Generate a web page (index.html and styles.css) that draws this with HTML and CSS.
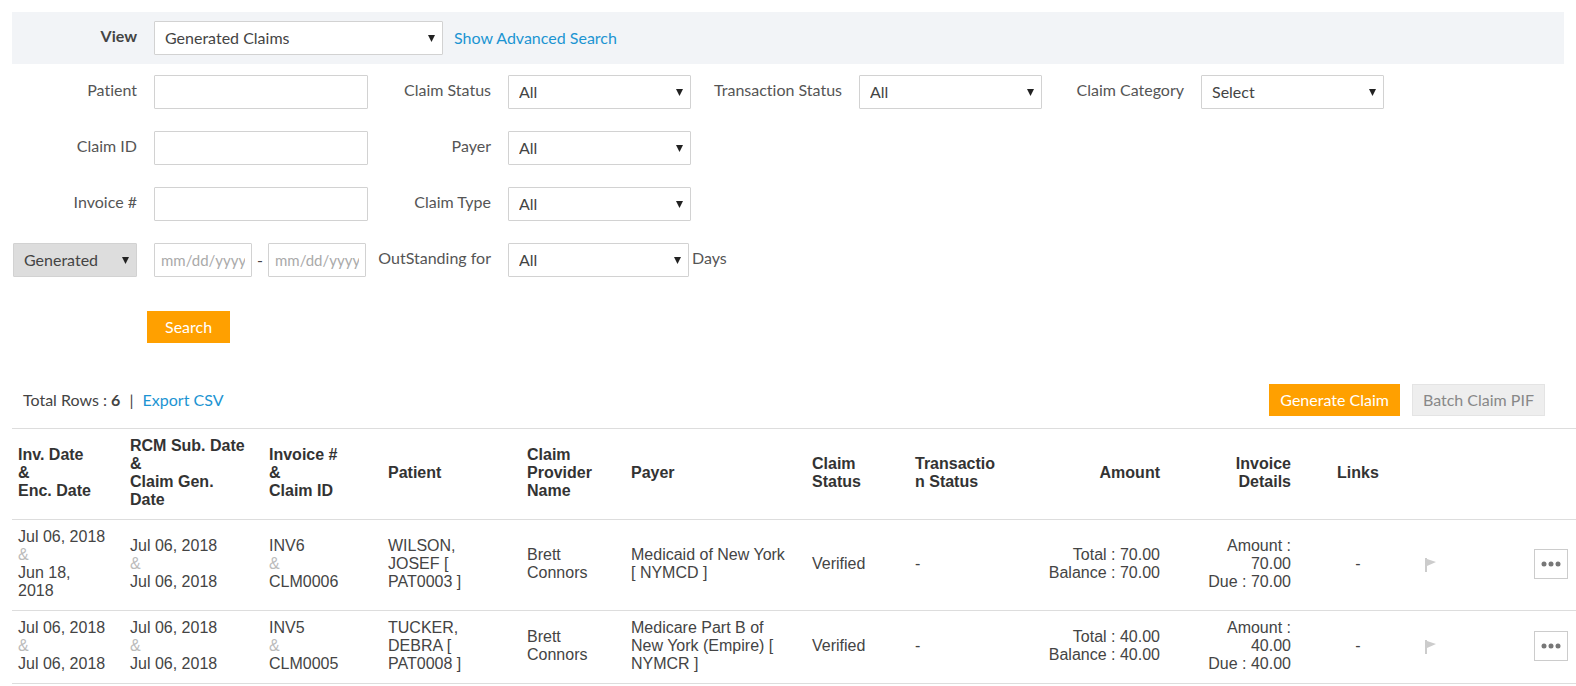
FILE: index.html
```html
<!DOCTYPE html>
<html lang="en">
<head>
    <meta charset="UTF-8">
    <meta name="viewport" content="width=device-width, initial-scale=1.0">
    <title>Claims</title>
    <link rel="stylesheet" href="styles.css">
</head>
<body>
    <form class="filters">
        <div class="view-bar">
            <label class="view-label" for="view">View</label>
            <select id="view" class="field view-select">
                <option>Generated Claims</option>
            </select>
            <a href="#" class="link">Show Advanced Search</a>
        </div>

        <div class="filter-grid">
            <label for="patient">Patient</label>
            <input type="text" id="patient" class="field">
            <label for="claim-status">Claim Status</label>
            <select id="claim-status" class="field"><option>All</option></select>
            <label for="transaction-status">Transaction Status</label>
            <select id="transaction-status" class="field"><option>All</option></select>
            <label for="claim-category">Claim Category</label>
            <select id="claim-category" class="field"><option>Select</option></select>

            <label for="claim-id" class="row-start">Claim ID</label>
            <input type="text" id="claim-id" class="field">
            <label for="payer">Payer</label>
            <select id="payer" class="field"><option>All</option></select>

            <label for="invoice" class="row-start">Invoice #</label>
            <input type="text" id="invoice" class="field">
            <label for="claim-type">Claim Type</label>
            <select id="claim-type" class="field"><option>All</option></select>

            <select class="field date-type row-start" aria-label="Date type"><option>Generated</option></select>
            <div class="date-range">
                <input type="text" class="field date" placeholder="mm/dd/yyyy" aria-label="From date">
                <span>-</span>
                <input type="text" class="field date" placeholder="mm/dd/yyyy" aria-label="To date">
            </div>
            <label for="outstanding">OutStanding for</label>
            <div class="outstanding">
                <select id="outstanding" class="field"><option>All</option></select>
                <label for="outstanding">Days</label>
            </div>
        </div>

        <button type="submit" class="btn btn-primary btn-search">Search</button>
    </form>

    <div class="toolbar">
        <p class="summary">Total Rows : <b>6</b> <span class="divider">|</span> <a href="#" class="link">Export CSV</a></p>
        <button type="button" class="btn btn-primary">Generate Claim</button>
        <button type="button" class="btn btn-disabled" disabled>Batch Claim PIF</button>
    </div>

    <table class="claims">
        <colgroup>
            <col class="col-date">
            <col class="col-rcm">
            <col class="col-invoice">
            <col class="col-patient">
            <col class="col-provider">
            <col class="col-payer">
            <col class="col-status">
            <col class="col-transaction">
            <col class="col-amount">
            <col class="col-details">
            <col class="col-links">
            <col class="col-flag">
            <col class="col-menu">
        </colgroup>
        <thead>
            <tr>
                <th>Inv. Date<br>&amp;<br>Enc. Date</th>
                <th>RCM Sub. Date<br>&amp;<br>Claim Gen. Date</th>
                <th>Invoice #<br>&amp;<br>Claim ID</th>
                <th>Patient</th>
                <th>Claim Provider Name</th>
                <th>Payer</th>
                <th>Claim Status</th>
                <th>Transaction Status</th>
                <th class="num">Amount</th>
                <th class="num">Invoice Details</th>
                <th class="center">Links</th>
                <th></th>
                <th></th>
            </tr>
        </thead>
        <tbody>
            <tr>
                <td>Jul 06, 2018<br><span class="amp">&amp;</span><br>Jun 18, 2018</td>
                <td>Jul 06, 2018<br><span class="amp">&amp;</span><br>Jul 06, 2018</td>
                <td>INV6<br><span class="amp">&amp;</span><br>CLM0006</td>
                <td>WILSON, JOSEF [ PAT0003 ]</td>
                <td>Brett Connors</td>
                <td>Medicaid of New York [ NYMCD ]</td>
                <td>Verified</td>
                <td>-</td>
                <td class="num">Total : 70.00<br>Balance : 70.00</td>
                <td class="num">Amount : 70.00<br>Due : 70.00</td>
                <td class="center">-</td>
                <td class="center">
                    <svg class="flag" viewBox="0 0 12 14"><path d="M1 0v14" stroke="#ccc" stroke-width="2"/><path d="M2 1l9 3-9 4z" fill="#ccc"/></svg>
                </td>
                <td class="menu">
                    <button type="button" class="btn-more" aria-label="More actions"><svg viewBox="0 0 20 6"><circle cx="3" cy="3" r="2.500"/><circle cx="10" cy="3" r="2.500"/><circle cx="17" cy="3" r="2.500"/></svg></button>
                </td>
            </tr>
            <tr>
                <td>Jul 06, 2018<br><span class="amp">&amp;</span><br>Jul 06, 2018</td>
                <td>Jul 06, 2018<br><span class="amp">&amp;</span><br>Jul 06, 2018</td>
                <td>INV5<br><span class="amp">&amp;</span><br>CLM0005</td>
                <td>TUCKER, DEBRA [ PAT0008 ]</td>
                <td>Brett Connors</td>
                <td>Medicare Part B of New York (Empire) [ NYMCR ]</td>
                <td>Verified</td>
                <td>-</td>
                <td class="num">Total : 40.00<br>Balance : 40.00</td>
                <td class="num">Amount : 40.00<br>Due : 40.00</td>
                <td class="center">-</td>
                <td class="center">
                    <svg class="flag" viewBox="0 0 12 14"><path d="M1 0v14" stroke="#ccc" stroke-width="2"/><path d="M2 1l9 3-9 4z" fill="#ccc"/></svg>
                </td>
                <td class="menu">
                    <button type="button" class="btn-more" aria-label="More actions"><svg viewBox="0 0 20 6"><circle cx="3" cy="3" r="2.500"/><circle cx="10" cy="3" r="2.500"/><circle cx="17" cy="3" r="2.500"/></svg></button>
                </td>
            </tr>
        </tbody>
    </table>
</body>
</html>
```

FILE: styles.css
```css
* {
    margin: 0;
    padding: 0;
    box-sizing: border-box;
}

body {
    padding: 12px 0 0 12px;
    font-family: Lato, sans-serif;
    font-size: 16px;
    line-height: 20px;
    font-variant-ligatures: none;
    color: #444;
    background: #fff;
}

.link {
    color: #1c94d2;
    text-decoration: none;
}

/* Form fields */
.field {
    width: 100%;
    min-width: 0;
    height: 34px;
    padding: 0 10px;
    border: 1px solid #d2d2d2;
    border-radius: 1px;
    background: #fff;
    color: #444;
    font: inherit;
}

select.field {
    appearance: none;
    padding-right: 24px;
    background: #fff url("data:image/svg+xml,%3Csvg xmlns='http://www.w3.org/2000/svg' width='7' height='7'%3E%3Cpath d='M0 0h7L3.500 7z' fill='%23222'/%3E%3C/svg%3E") no-repeat right 7px center;
}

.field::placeholder {
    color: #aaa;
}

/* View bar */
.view-bar {
    display: flex;
    align-items: center;
    margin-right: 12px;
    padding: 9px 0;
    background: #f2f4f7;
}

.view-label {
    width: 125px;
    margin-right: 17px;
    padding-bottom: 4px;
    font-weight: bold;
    text-align: right;
}

.view-select {
    width: 289px;
    margin-right: 11px;
}

/* Filters */
.filter-grid {
    display: grid;
    grid-template-columns: 125px minmax(0, 214px) 106px minmax(0, 183px) 134px minmax(0, 183px) 125px minmax(0, 183px);
    gap: 22px 17px;
    align-items: center;
    margin-top: 11px;
}

.filter-grid label {
    justify-self: end;
    padding-bottom: 5px;
    white-space: nowrap;
    color: #555;
}

.row-start {
    grid-column-start: 1;
}

select.date-type {
    width: 124px;
    justify-self: end;
    background-color: #ddd;
}

.date-range {
    display: flex;
    align-items: center;
    gap: 5px;
}

.date {
    flex: none;
    width: 98px;
    padding: 0 6px;
    font-size: 15px;
}

.outstanding {
    display: flex;
    align-items: center;
    gap: 3px;
}

.outstanding .field {
    flex: none;
    width: 181px;
}

/* Buttons */
.btn {
    height: 32px;
    padding: 0 11px;
    border: none;
    font: inherit;
    white-space: nowrap;
}

.btn-primary {
    background: #ffa000;
    color: #fff;
}

.btn-disabled {
    padding: 0 10px;
    border: 1px solid #e4e4e4;
    background: #eee;
    color: #888;
}

.btn-search {
    margin: 34px 0 0 135px;
    padding: 0 18px;
}

.toolbar {
    display: flex;
    align-items: center;
    gap: 12px;
    margin: 41px 31px 12px 11px;
}

.summary {
    flex: 1;
}

.divider {
    margin: 0 5px;
}

/* Claims table */
.claims {
    width: 100%;
    table-layout: fixed;
    border-collapse: collapse;
    border-top: 1px solid #ddd;
    font-family: "Liberation Sans", Arial, sans-serif;
    line-height: 18px;
}

.claims tr {
    border-bottom: 1px solid #ddd;
}

.claims th,
.claims td {
    padding: 8px 16px 10px 6px;
    text-align: left;
    vertical-align: middle;
    overflow-wrap: break-word;
}

.claims th {
    color: #333;
}

.claims .num {
    padding-left: 20px;
    text-align: right;
}

.claims .center {
    padding-right: 6px;
    text-align: center;
}

.claims .menu {
    padding-right: 8px;
    text-align: right;
}

.col-date { width: 112px; }
.col-rcm { width: 139px; }
.col-invoice { width: 119px; }
.col-patient { width: 139px; }
.col-provider { width: 104px; }
.col-status { width: 103px; }
.col-transaction { width: 107px; }
.col-amount { width: 160px; }
.col-details { width: 131px; }
.col-links { width: 102px; }
.col-flag { width: 44px; }
.col-menu { width: 123px; }

.amp {
    color: #bbb;
}

.flag {
    width: 12px;
    height: 14px;
    vertical-align: middle;
}

.btn-more {
    width: 34px;
    height: 30px;
    border: 1px solid #ccc;
    background: #fff;
    vertical-align: middle;
}

.btn-more svg {
    display: block;
    width: 20px;
    height: 6px;
    margin: 0 auto;
    fill: #777;
}
```
